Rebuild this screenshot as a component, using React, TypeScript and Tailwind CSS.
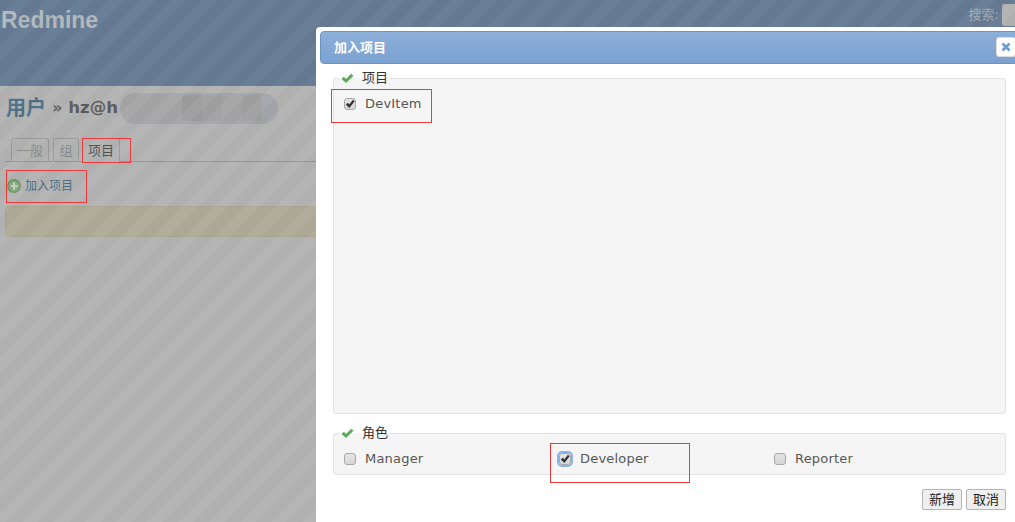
import React from 'react';

const RedBox: React.FC<{ className: string }> = ({ className }) => (
    <div className={`absolute border border-[#f03a3a] ${className}`} />
);

const CheckMark: React.FC = () => (
    <svg viewBox="0 0 14 12" className="w-[13px] h-[11px]">
        <path d="M0.5 6.5 L3 4.2 L5.4 6.6 L11 0.8 L13.5 3 L5.5 11 Z" fill="#5cab5c" />
    </svg>
);

const Checkbox: React.FC<{ checked?: boolean; focused?: boolean }> = ({ checked, focused }) => (
    <span className={`w-3 h-3 rounded-[3px] border border-[#a9a9a9] bg-[linear-gradient(#e4e4e4,#d6d6d6)] flex items-center justify-center shrink-0 ${focused ? 'outline-2 outline-[#8cb4ec]' : ''}`}>
        {checked && (
            <svg viewBox="0 0 10 10" className="w-[10px] h-[10px]">
                <path d="M0.8 5.5 L3 3.8 L4.2 5.4 L8 0.8 L9.6 2.2 L4.4 9 Z" fill="#333" />
            </svg>
        )}
    </span>
);

const Option: React.FC<{ label: string; checked?: boolean; focused?: boolean; className?: string }> = ({ label, checked, focused, className }) => (
    <label className={`flex items-center gap-[9px] ${className ?? ''}`}>
        <Checkbox checked={checked} focused={focused} />
        <span className="text-[13px] tracking-[0.2px] text-[#555]">{label}</span>
    </label>
);

const Legend: React.FC<{ text: string }> = ({ text }) => (
    <legend className="flex items-center gap-[8px] px-[2px] -ml-[5px] h-[16px] text-[13px] text-[#333]">
        <CheckMark />
        <span>{text}</span>
    </legend>
);

const Background: React.FC = () => (
    <div className="w-[1015px] h-[522px] bg-[#b4b4b4]">
        <header className="h-[86px] bg-[#667c95] flex justify-between pt-[5px] pl-[1px]">
            <div className="text-[23px] leading-[30px] font-bold text-[#b3b9bd] font-['Liberation_Sans',sans-serif]">Redmine</div>
            <div className="flex items-start">
                <span className="text-[13px] leading-[20px] text-[#a3adb5]">搜索:</span>
                <span className="w-[13px] h-[22px] ml-[3px] -mt-[1px] rounded-l-[2px] bg-[#b3b3b3]" />
            </div>
        </header>
        <div className="pl-[6px] pt-[8px]">
            <h2 className="h-[28px] flex items-center text-[20px] font-bold">
                <span className="text-[#4d7189]">用户</span>
                <span className="text-[#666] mx-[6px] text-[16px] leading-[20px]">»</span>
                <span className="text-[#5d5d5d] font-['DejaVu_Sans',sans-serif] text-[16.5px]">hz@h</span>
                <span className="w-[158px] h-[31px] ml-[2px] rounded-full bg-[#a6a7ac] flex items-center overflow-hidden">
                    <span className="w-[60px] h-[26px] ml-[2px] bg-[#a6a6a6]" />
                    <span className="w-[20px] h-[26px] bg-[#9e9e9e]" />
                    <span className="w-[20px] h-[26px] bg-[#a2a2a2]" />
                    <span className="w-[20px] h-[26px] bg-[#a6a6a6]" />
                    <span className="w-[20px] h-[26px] bg-[#a1a1a1]" />
                </span>
            </h2>
            <div className="mt-[16px] flex items-end gap-[4px] h-[24px] pl-[6px] -ml-[1px] border-b border-[#969696]">
                <div className="w-[38px] h-[24px] -mb-px rounded-t-[3px] border border-[#9a9a9a] border-b-0 text-center text-[13px] leading-[24px] text-[#8a8a8a]">一般</div>
                <div className="w-[26px] h-[24px] -mb-px rounded-t-[3px] border border-[#9a9a9a] border-b-0 text-center text-[13px] leading-[24px] text-[#8a8a8a]">组</div>
                <div className="w-[38px] h-[24px] -mb-px -ml-px rounded-t-[3px] border border-[#9a9a9a] border-b-0 bg-[#b4b4b4] text-center text-[13px] leading-[24px] text-[#555]">项目</div>
            </div>
            <div className="mt-[16px] flex items-center h-[16px] gap-[4px] pl-[1px]">
                <svg viewBox="0 0 14 14" className="w-[14px] h-[14px]">
                    <circle cx="7" cy="7" r="6.2" fill="#8aa982" stroke="#6c9660" strokeWidth="1.4" />
                    <path d="M7 3.6 V10.4 M3.6 7 H10.4" stroke="#c9d5c4" strokeWidth="2.2" />
                </svg>
                <span className="text-[12px] text-[#4e6e86]">加入项目</span>
            </div>
            <div className="mt-[12px] h-[31px] -ml-px rounded-[3px] border border-[#aba68e] bg-[#b0ac99]" />
        </div>
    </div>
);

const Dialog: React.FC = () => (
    <div className="absolute left-[316px] top-[27px] w-[720px] h-[520px] bg-white rounded-[4px] p-[4px] text-[13px]">
        <div className="h-[33px] w-[710px] flex items-center pl-[13px] rounded-[4px] border border-[#6a94c2] bg-[linear-gradient(#8db0da,#7ba1d0)] relative">
            <span className="text-[13px] font-bold text-white">加入项目</span>
            <button className="absolute left-[675px] top-[5px] w-[20px] h-[20px] rounded-[3px] bg-white border border-[#dcdcdc] flex items-center justify-center">
                <svg viewBox="0 0 10 10" className="w-[10px] h-[10px]">
                    <path d="M1.5 1.5 L8.5 8.5 M8.5 1.5 L1.5 8.5" stroke="#6b9bd2" strokeWidth="2.6" />
                </svg>
            </button>
        </div>
        <div className="w-[673px] ml-[13px] mt-[6px]">
            <fieldset className="h-[344px] rounded-[3px] border border-[#e3e3e3] bg-[#f5f5f5] pl-[10px]">
                <Legend text="项目" />
                <Option label="DevItem" checked className="mt-[8px]" />
            </fieldset>
            <fieldset className="mt-[11px] h-[50px] rounded-[3px] border border-[#e3e3e3] bg-[#f5f5f5] pl-[10px]">
                <Legend text="角色" />
                <div className="grid grid-cols-[215px_215px_1fr] mt-[8px]">
                    <Option label="Manager" />
                    <Option label="Developer" checked focused />
                    <Option label="Reporter" />
                </div>
            </fieldset>
            <div className="mt-[14px] flex justify-end gap-[4px]">
                <button className="w-[40px] h-[21px] border border-[#b5b5b5] rounded-[2px] bg-[#efefef] text-[13px] text-[#222]">新增</button>
                <button className="w-[40px] h-[21px] border border-[#b5b5b5] rounded-[2px] bg-[#efefef] text-[13px] text-[#222]">取消</button>
            </div>
        </div>
    </div>
);

export default function App() {
    return (
        <div className="relative w-[1015px] h-[522px] overflow-hidden font-['DejaVu_Sans','Noto_Sans_CJK_SC',sans-serif]">
            <Background />
            {/* diagonal stripes of the modal overlay */}
            <div className="absolute inset-0 bg-[repeating-linear-gradient(135deg,rgba(0,0,0,0.025)_0px,rgba(0,0,0,0.025)_11px,rgba(255,255,255,0.02)_11px,rgba(255,255,255,0.02)_22px)]" />
            <Dialog />
            <RedBox className="left-[82px] top-[138px] w-[49px] h-[25px]" />
            <RedBox className="left-[6px] top-[170px] w-[81px] h-[33px]" />
            <RedBox className="left-[331px] top-[89px] w-[101px] h-[34px]" />
            <RedBox className="left-[550px] top-[443px] w-[140px] h-[40px]" />
        </div>
    );
}
